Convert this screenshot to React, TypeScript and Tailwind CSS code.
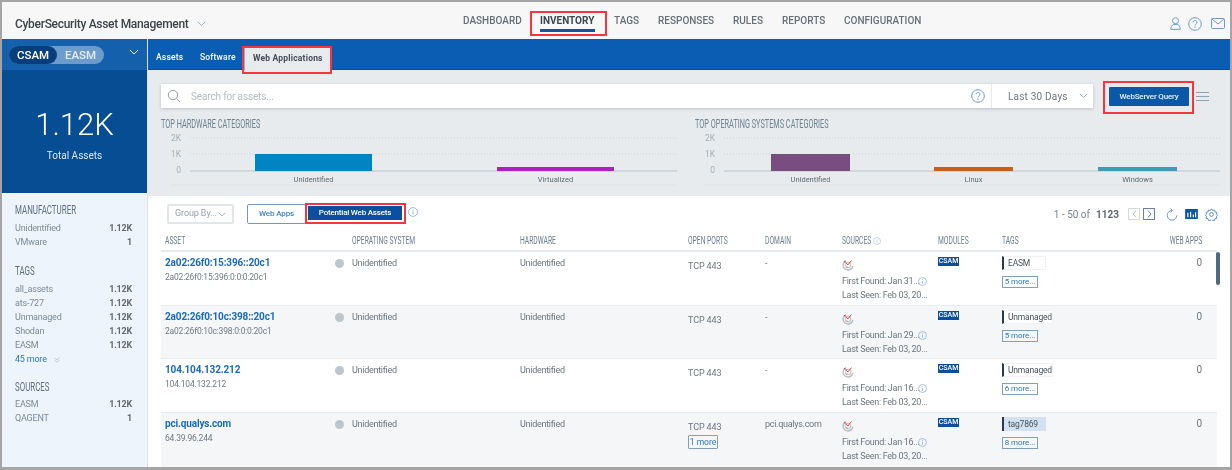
import React from "react";

function Cond({ children, className = "", right = false }: { children: React.ReactNode; className?: string; right?: boolean }) {
  return (
    <span className={`inline-block whitespace-nowrap scale-x-[0.61] ${right ? "origin-right" : "origin-left"} ${className}`}>{children}</span>
  );
}

function RedBox({ className }: { className: string }) {
  return <span className={`absolute border-2 border-[#f4373f] pointer-events-none ${className}`} />;
}

function Chevron({ className = "", color = "#7f9cbc", w = 12 }: { className?: string; color?: string; w?: number }) {
  return (
    <svg width={w} height={w * 0.6} viewBox="0 0 12 7" fill="none" className={className}>
      <path d="M1 1l5 5 5-5" stroke={color} strokeWidth="1.1" />
    </svg>
  );
}

function Info({ size = 10, color = "#7fa5d0" }: { size?: number; color?: string }) {
  return (
    <svg width={size} height={size} viewBox="0 0 12 12" fill="none" className="shrink-0">
      <circle cx="6" cy="6" r="5.3" stroke={color} strokeWidth="0.9" />
      <path d="M6 5.2v3.6M6 3v1" stroke={color} strokeWidth="1" />
    </svg>
  );
}

function Help({ size = 14 }: { size?: number }) {
  return (
    <svg width={size} height={size} viewBox="0 0 14 14" fill="none" className="shrink-0">
      <circle cx="7" cy="7" r="6.3" stroke="#6f9ac8" strokeWidth="1" />
      <path d="M5 5.4c0-1.2 1-1.9 2-1.9s2 .7 2 1.8c0 1.5-2 1.5-2 3.1" stroke="#6f9ac8" strokeWidth="1" />
      <path d="M7 9.6v1.1" stroke="#6f9ac8" strokeWidth="1.1" />
    </svg>
  );
}

function Radar() {
  return (
    <svg width="12" height="12" viewBox="0 0 12 12" fill="none">
      <circle cx="6" cy="6" r="5" stroke="#b4bbc2" strokeWidth="1.3" strokeDasharray="20 12" transform="rotate(10 6 6)" />
      <circle cx="6" cy="6" r="2.8" stroke="#c3c9ce" strokeWidth="1.1" />
      <path d="M3.8 3.4l2 2.600L9.400 1.600" stroke="#e0322f" strokeWidth="0.9" />
      <circle cx="2.8" cy="2.8" r="0.8" fill="#e0322f" />
      <circle cx="5" cy="8" r="0.5" fill="#e0322f" />
    </svg>
  );
}

function Facet({ title, rows, more, className = "", gap = "mt-[5px]" }: { title: string; rows: [string, string][]; more?: string; className?: string; gap?: string }) {
  return (
    <div className={className}>
      <div className="h-[14px] leading-[14px] text-[13px] text-[#5d7080]">
        <Cond>{title}</Cond>
      </div>
      <div className={`${gap} flex flex-col`}>
        {rows.map(([a, b]) => (
          <div key={a} className="h-[14px] flex items-center justify-between text-[9px] tracking-[-0.2px] text-[#7b8a97]">
            <span>{a}</span>
            <span className="font-bold text-[#5f6b75]">{b}</span>
          </div>
        ))}
        {more && (
          <div className="h-[14px] flex items-center gap-[7px] text-[9px] tracking-[-0.2px] text-[#2f77bd]">
            <span>{more}</span>
            <svg width="6" height="6" viewBox="0 0 6 6" fill="none">
              <path d="M.5.8L3 2.8 5.5.8M.5 3.2L3 5.2l2.5-2" stroke="#9db7d3" strokeWidth="0.7" />
            </svg>
          </div>
        )}
      </div>
    </div>
  );
}

function Chart({ bars, width, axisX, lineStart, barW }: { bars: { x: number; c: string; h: number; l: string }[]; width: number; axisX: number; lineStart: number; barW: number }) {
  return (
    <svg width={width} height="56" viewBox={`0 0 ${width} 56`} className="mt-[2px] block" fontFamily="Roboto">
      <line x1={lineStart} x2={width} y1="6" y2="6" stroke="#ccd3d8" strokeDasharray="1 2" />
      <line x1={lineStart} x2={width} y1="22" y2="22" stroke="#ccd3d8" strokeDasharray="1 2" />
      <line x1={lineStart} x2={width} y1="39" y2="39" stroke="#b9c2c9" strokeWidth="1" />
      <line x1={lineStart - 20} x2={width} y1="53" y2="53" stroke="#dde2e6" strokeWidth="1" />
      {[["2K", 9], ["1K", 25], ["0", 41]].map(([t, y]) => (
        <text key={t} x={axisX} y={y} textAnchor="end" fontSize="8.5" fill="#a5afb7">{t}</text>
      ))}
      {bars.map((b) => (
        <g key={b.l}>
          <rect x={b.x} y={39 - b.h} width={barW} height={b.h} fill={b.c} />
          <text x={b.x + barW / 2} y="50" textAnchor="middle" fontSize="7.5" fill="#5d6972">{b.l}</text>
        </g>
      ))}
    </svg>
  );
}

type Row = { name: string; sub: string; first: string; domain: string; tag: string; tagBlue?: boolean; tagW: string; more: string; extra?: boolean };
const rows: Row[] = [
  { name: "2a02:26f0:15:396::20c1", sub: "2a02:26f0:15:396:0:0:0:20c1", first: "Jan 31", domain: "-", tag: "EASM", tagW: "w-[44px]", more: "5 more..." },
  { name: "2a02:26f0:10c:398::20c1", sub: "2a02:26f0:10c:398:0:0:0:20c1", first: "Jan 29", domain: "-", tag: "Unmanaged", tagW: "w-[51px]", more: "5 more..." },
  { name: "104.104.132.212", sub: "104.104.132.212", first: "Jan 16", domain: "-", tag: "Unmanaged", tagW: "w-[51px]", more: "6 more..." },
  { name: "pci.qualys.com", sub: "64.39.96.244", first: "Jan 16", domain: "pci.qualys.com", tag: "tag7869", tagBlue: true, tagW: "w-[44px]", more: "8 more...", extra: true },
];

const cols = "grid grid-cols-[187px_168px_168px_77px_77px_96px_64px_200px]";

function TableRow({ r, i }: { r: Row; i: number }) {
  const heights = ["h-[54px]", "h-[53px]", "h-[54px]", "h-[55px]"];
  return (
    <div className={`${cols} ${heights[i]} px-[4px] border-b border-[#e8ebee] text-[9px] tracking-[-0.28px] text-[#6b7680] ${i % 2 ? "bg-[#f5f6f8]" : "bg-white"}`}>
      <div className="relative pt-[4px]">
        <div className="text-[10px] leading-[13px] tracking-[-0.15px] font-bold text-[#1a6bbb]">{r.name}</div>
        <div className="mt-[2px] text-[8.5px] leading-[13px] tracking-[-0.2px] text-[#6f7a83]">{r.sub}</div>
        <span className="absolute right-[8px] top-[7px] h-[9px] w-[9px] rounded-full bg-[#bcc6cc]" />
      </div>
      <div className="pt-[5px] leading-[12px]">Unidentified</div>
      <div className="pt-[5px] leading-[12px]">Unidentified</div>
      <div className="pt-[8px]">
        <div className="leading-[12px] tracking-[-0.1px]">TCP 443</div>
        {r.extra && (
          <div className="mt-[2px] w-[30px] h-[14px] flex items-center justify-center border border-[#7fa0bf] rounded-[1px] text-[8.5px] tracking-normal text-[#2f77bd]">1 more</div>
        )}
      </div>
      <div className="pt-[5px] leading-[12px]">{r.domain}</div>
      <div className="pt-[7px]">
        <Radar />
        <div className="mt-[4px] flex items-center gap-[1px] leading-[12px] whitespace-nowrap">
          <span className="w-[75px]">First Found: {r.first}...</span>
          <Info size={9} />
        </div>
        <div className="mt-[2px] leading-[12px] whitespace-nowrap">Last Seen: Feb 03, 20...</div>
      </div>
      <div className="pt-[5px]">
        <span className="flex h-[9px] w-[21px] items-center justify-center bg-[#0b4f9e] text-[7px] font-medium tracking-normal text-white">CSAM</span>
      </div>
      <div className="relative pt-[4px]">
        <div className={`flex h-[14px] items-center ${r.tagW} border-l-[2px] border-[#2a3a4a] pl-[4px] text-[8.5px] tracking-[-0.2px] text-[#48525b] ${r.tagBlue ? "bg-[#d3e2f1]" : "bg-white border-y border-r border-y-[#f0f2f4] border-r-[#f0f2f4]"}`}>{r.tag}</div>
        <div className="mt-[6px] flex h-[12px] w-[36px] items-center justify-center border border-[#7fa0bf] text-[8px] tracking-[-0.1px] text-[#2f77bd]">{r.more}</div>
        <span className="absolute right-0 top-[4px] text-[10px] leading-[14px] tracking-normal text-[#6b7680]">0</span>
      </div>
    </div>
  );
}

export default function App() {
  return (
    <div className="h-[470px] w-[1232px] overflow-hidden border-t-2 border-l-2 border-r-[2px] border-b-[3px] border-[#a5a5a5] font-['Roboto',sans-serif] flex flex-col bg-white blur-[0.35px]">
      {/* Header */}
      <header className="h-[37px] shrink-0 flex bg-[#f7f7f7]">
        <div className="w-[461px] shrink-0 flex items-center pl-[13px] pt-[7px] text-[12px] tracking-[-0.3px] font-medium text-[#3d444b]">
          <span className="whitespace-nowrap">CyberSecurity Asset Management</span>
          <Chevron className="ml-[8px]" w={9} />
        </div>
        <nav className="flex gap-[19px] pt-[12px] text-[10px] font-medium text-[#666f78] leading-[13px]">
          <span className="w-[58px]">DASHBOARD</span>
          <span className="relative h-[18px] w-[55px] font-bold text-[#3e4650]">
            INVENTORY
            <span className="absolute left-0 right-0 bottom-0 h-[3px] bg-[#0b56a6]" />
            <RedBox className="-left-[10px] -right-[12px] -top-[3px] -bottom-[4px]" />
          </span>
          <span className="w-[25px]">TAGS</span>
          <span className="w-[56px]">RESPONSES</span>
          <span className="w-[30px]">RULES</span>
          <span className="w-[43px]">REPORTS</span>
          <span>CONFIGURATION</span>
        </nav>
        <div className="ml-auto flex items-center pr-[5px] pt-[6px]">
          <svg width="11" height="13" viewBox="0 0 11 13" fill="none">
            <circle cx="5.5" cy="3.7" r="3" stroke="#6f9ac8" />
            <path d="M.8 12.400c0-2.600 1.200-4.400 2.900-5h3.600c1.700.6 2.900 2.400 2.900 5z" stroke="#6f9ac8" />
          </svg>
          <span className="ml-[7px]"><Help size={14} /></span>
          <svg width="14" height="11" viewBox="0 0 14 11" fill="none" className="ml-[9px]">
            <rect x=".5" y=".5" width="13" height="10" rx="1" stroke="#6f9ac8" />
            <path d="M1 1l6 5 6-5" stroke="#6f9ac8" />
          </svg>
        </div>
      </header>

      <div className="flex flex-1 min-h-0">
        {/* Sidebar */}
        <aside className="w-[145px] shrink-0 flex flex-col bg-[#eef4fb]">
          <div className="h-[31px] shrink-0 bg-[#1560ad] flex items-start pl-[7px] pt-[7px] relative">
            <div className="flex h-[18px] w-[95px] rounded-full bg-[#6d9ccc] text-[11.5px] font-medium leading-[18px]">
              <span className="w-[48px] rounded-full bg-[#083e7c] text-center text-white">CSAM</span>
              <span className="flex-1 text-center text-[#e4eef8]">EASM</span>
            </div>
            <Chevron className="absolute left-[127px] top-[10px]" color="#ffffff" w={10} />
          </div>
          <div className="h-[123px] shrink-0 bg-[#064d94] flex flex-col items-center text-white pt-[38px]">
            <div className="text-[31px] leading-[34px] font-light">1.12K</div>
            <div className="mt-[8px] text-[10px] leading-[12px] text-[#dce8f4]">Total Assets</div>
          </div>
          <div className="flex-1 px-[13px] pr-[15px] pt-[10px] flex flex-col">
            <Facet title="MANUFACTURER" rows={[["Unidentified", "1.12K"], ["VMware", "1"]]} />
            <Facet className="mt-[14px]" title="TAGS" rows={[["all_assets", "1.12K"], ["ats-727", "1.12K"], ["Unmanaged", "1.12K"], ["Shodan", "1.12K"], ["EASM", "1.12K"]]} more="45 more" />
            <Facet className="mt-[13px]" gap="mt-[4px]" title="SOURCES" rows={[["EASM", "1.12K"], ["QAGENT", "1"]]} />
          </div>
        </aside>

        {/* Main */}
        <main className="flex-1 min-w-0 flex flex-col border-l border-[#dde3e8]">
          <div className="h-[31px] shrink-0 flex items-end bg-[#0b5db3] border-b border-[#08509c] pl-[8px] text-[8.5px] font-medium tracking-[0.2px] text-white">
            <span className="h-[24px] w-[27px] leading-[24px] mr-[17px]">Assets</span>
            <span className="h-[24px] w-[36px] leading-[24px] mr-[8px]">Software</span>
            <span className="relative h-[24px] w-[86px] -mb-[1px] bg-[#e7ebee] border-l border-[#8fb0d0] pl-[8px] leading-[24px] font-bold text-[#444c55]">
              Web Applications
              <RedBox className="-left-[3px] -right-[2px] top-0 -bottom-[4px]" />
            </span>
          </div>

          <section className="h-[126px] shrink-0 bg-[#e7ebee] px-[13px] pt-[14px]">
            <div className="flex items-start">
              <div className="h-[24px] w-[932px] flex items-center bg-white shadow-[0_1px_3px_rgba(80,90,100,0.3)]">
                <svg width="14" height="14" viewBox="0 0 14 14" fill="none" className="ml-[6px]">
                  <circle cx="6" cy="6" r="4.7" stroke="#8d99a5" />
                  <path d="M9.500 9.500L13 13" stroke="#8d99a5" />
                </svg>
                <span className="ml-[10px] text-[10px] tracking-[-0.15px] text-[#b4bcc3]">Search for assets...</span>
                <span className="ml-auto"><Help size={14} /></span>
                <span className="ml-[6px] h-full w-px bg-[#e6e9ec]" />
                <span className="ml-[16px] w-[59px] whitespace-nowrap text-[10px] text-[#6b7680] tracking-[0.2px]">Last 30 Days</span>
                <Chevron className="ml-[12px] mr-[5px]" w={9} />
              </div>
              <div className="relative ml-[16px] mt-[3px] h-[19px] w-[80px] flex items-center justify-center rounded-[1px] bg-[#0b58a8] text-[8px] tracking-[-0.2px] font-medium text-[#e8f0f8]">
                WebServer Query
                <RedBox className="-left-[6px] -right-[5px] -top-[6px] -bottom-[8px]" />
              </div>
              <div className="ml-[7px] mt-[8px] flex w-[13px] flex-col gap-[3px]">
                <span className="h-px bg-[#8fa3b5]" />
                <span className="h-px bg-[#8fa3b5]" />
                <span className="h-px bg-[#8fa3b5]" />
              </div>
            </div>
            <div className="mt-[10px] flex">
              <div className="w-[534px] shrink-0">
                <div className="h-[12px] leading-[12px] text-[12px] text-[#6f8290]"><Cond>TOP HARDWARE CATEGORIES</Cond></div>
                <Chart width={516} axisX={20} lineStart={29} barW={117} bars={[
                  { x: 94, c: "#0085c3", h: 17, l: "Unidentified" },
                  { x: 336, c: "#a823b8", h: 4, l: "Virtualized" },
                ]} />
              </div>
              <div className="flex-1">
                <div className="h-[12px] leading-[12px] text-[12px] text-[#6f8290]"><Cond>TOP OPERATING SYSTEMS CATEGORIES</Cond></div>
                <Chart width={525} axisX={20} lineStart={29} barW={79} bars={[
                  { x: 76, c: "#7a4d80", h: 17, l: "Unidentified" },
                  { x: 239, c: "#c55f1c", h: 4, l: "Linux" },
                  { x: 403, c: "#3d9bb8", h: 4, l: "Windows" },
                ]} />
              </div>
            </div>
          </section>

          <section className="flex-1 min-h-0 relative bg-white px-[13px]">
            {/* Toolbar */}
            <div className="h-[33px] flex items-start pt-[8px] pl-[6px]">
              <div className="h-[20px] w-[67px] flex items-center justify-between px-[6px] border-2 border-[#e1e6eb] rounded-[2px] text-[9px] tracking-[-0.1px] text-[#98a2ab]">
                <span className="whitespace-nowrap">Group By...</span>
                <Chevron w={8} />
              </div>
              <div className="ml-[13px] h-[20px] w-[59px] flex items-center justify-center border border-[#6f9ac8] rounded-[2px] text-[8px] tracking-[-0.1px] font-medium text-[#3f7fbe]">Web Apps</div>
              <div className="relative ml-[2px] mt-[2px] h-[14px] w-[94px] flex items-center justify-center bg-[#0b4f9e] text-[8px] tracking-[-0.2px] font-medium text-white">
                Potential Web Assets
                <RedBox className="-left-[3px] -right-[4px] -top-[3px] -bottom-[4px]" />
              </div>
              <span className="ml-[6px] mt-[3px]"><Info size={10} /></span>
              <div className="ml-auto -mr-[1px] flex h-[20px] items-center">
                <span className="text-[10px] text-[#7a858f]">1 - 50 of</span>
                <span className="ml-[6px] text-[10px] font-bold text-[#5f6b75]">1123</span>
                <span className="ml-[9px] h-[12px] w-[12px] flex items-center justify-center border border-[#d3dade]">
                  <svg width="5" height="8" viewBox="0 0 5 8" fill="none"><path d="M4 .7L1 4l3 3.300" stroke="#b3bec7" /></svg>
                </span>
                <span className="ml-[3px] h-[12px] w-[12px] flex items-center justify-center border border-[#6b7fae]">
                  <svg width="5" height="8" viewBox="0 0 5 8" fill="none"><path d="M1 .7L4 4 1 7.300" stroke="#5f77a8" /></svg>
                </span>
                <svg width="12" height="13" viewBox="0 0 12 13" fill="none" className="ml-[11px]">
                  <path d="M6 2.500A4.800 4.800 0 1 0 10.800 7.300" stroke="#6f9ac8" />
                  <path d="M4.500 .5L6.500 2.500 4.500 4.500" stroke="#6f9ac8" />
                </svg>
                <svg width="13" height="10" viewBox="0 0 14 11" className="ml-[7px]">
                  <rect width="14" height="11" fill="#0b56a6" />
                  <path d="M3 9V4M6 9V3M9 9V6M11.500 9V3.500" stroke="#fff" strokeWidth="1.300" />
                </svg>
                <svg width="13" height="13" viewBox="0 0 24 24" fill="none" stroke="#4f86c0" strokeWidth="1.700" className="ml-[7px]">
                  <circle cx="12" cy="12" r="3.500" />
                  <path d="M12 1.500l2 3 3.500-.8 1 3.500 3.500 1-.8 3.500 2 1.800-2 1.800.8 3.500-3.500 1-1 3.500-3.500-.8-2 2-2-2-3.500.8-1-3.500-3.500-1 .8-3.500-2-1.800 2-1.800-.8-3.500 3.500-1 1-3.500 3.500.8z" />
                </svg>
              </div>
            </div>

            {/* Table */}
            <div className={`${cols} h-[22px] mt-[1px] px-[4px] pt-[2px] items-center border-b-2 border-[#e6eaee] text-[11px] text-[#6b7e8d]`}>
              <div><Cond>ASSET</Cond></div>
              <div><Cond>OPERATING SYSTEM</Cond></div>
              <div><Cond>HARDWARE</Cond></div>
              <div><Cond>OPEN PORTS</Cond></div>
              <div><Cond>DOMAIN</Cond></div>
              <div className="flex items-center">
                <span className="w-[31px]"><Cond>SOURCES</Cond></span>
                <Info size={8} color="#9db7d3" />
              </div>
              <div><Cond>MODULES</Cond></div>
              <div className="flex justify-between"><Cond>TAGS</Cond><Cond right>WEB APPS</Cond></div>
            </div>
            {rows.map((r, i) => <TableRow key={r.name} r={r} i={i} />)}
            <span className="absolute left-[1068px] top-[56px] h-[33px] w-[4px] rounded-full bg-[#4f6a80]" />
          </section>
        </main>
      </div>
    </div>
  );
}
